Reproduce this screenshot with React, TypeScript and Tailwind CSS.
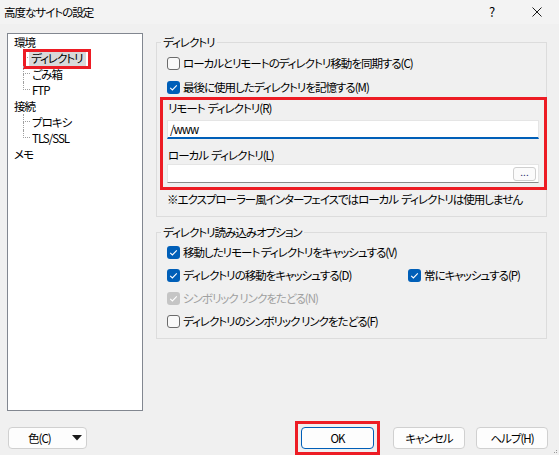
import React from 'react'

type CheckState = 'on' | 'off' | 'disabled'

function CheckBox({ state }: { state: CheckState }) {
  if (state === 'off') {
    return <span className="block h-[13px] w-[13px] shrink-0 rounded-[3px] border border-[#6b6b6b] bg-[#f9f9f9]" />
  }
  return (
    <span
      className={
        state === 'on'
          ? 'flex h-[13px] w-[13px] shrink-0 items-center justify-center rounded-[3px] bg-[#005fb8]'
          : 'flex h-[13px] w-[13px] shrink-0 items-center justify-center rounded-[3px] bg-[#c5c5c5]'
      }
    >
      <svg width="13" height="13" viewBox="0 0 13 13">
        <polyline points="3.2,6.8 5.4,9 9.8,4.4" fill="none" stroke="white" strokeWidth="1.1" />
      </svg>
    </span>
  )
}

function CheckRow({ state, label, hotkey, className = '' }: { state: CheckState; label: string; hotkey: string; className?: string }) {
  const disabled = state === 'disabled'
  return (
    <div className={'flex h-[16px] items-center gap-[3px] whitespace-nowrap ' + className}>
      <CheckBox state={state} />
      <span className={disabled ? 'text-[#a0a0a0]' : 'text-black'}>
        {label}({hotkey})
      </span>
    </div>
  )
}

function TreeChild({ label, last, selected }: { label: string; last?: boolean; selected?: boolean }) {
  return (
    <div className="relative flex h-[16px] items-center">
      <div className="flex h-full w-[7px] shrink-0 flex-col">
        <div className="h-[8px] w-[7px] border-b border-l border-dotted border-[#a0a0a0]" />
        {!last && <div className="h-[8px] w-[7px] border-l border-dotted border-[#a0a0a0]" />}
      </div>
      {selected ? (
        <>
          <span className="ml-[-1px] flex h-[15px] w-[57px] items-center bg-[#d9d9d9] pl-[2px]">{label}</span>
          <span className="absolute left-0 top-[-1px] h-[20px] w-[68px] border-[3px] border-[#ed1c24]" />
        </>
      ) : (
        <span className="ml-[2px]">{label}</span>
      )}
    </div>
  )
}

function Button({ children, primary }: { children: React.ReactNode; primary?: boolean }) {
  return (
    <div
      className={
        primary
          ? 'flex h-[22px] w-[73px] items-center justify-center rounded-[4px] border border-[#005fb8] bg-[#fdfdfd]'
          : 'flex h-[22px] w-[72px] items-center justify-center rounded-[4px] border border-[#d0d0d0] bg-[#fdfdfd]'
      }
    >
      {children}
    </div>
  )
}

export default function App() {
  return (
    <div className="relative h-[455px] w-[559px] overflow-hidden bg-[#f0f0f0] font-['Noto_Sans_CJK_JP',sans-serif] text-[11.5px] leading-[16px] tracking-[-1px] text-black [font-feature-settings:'palt']">
      {/* Title bar */}
      <div className="flex h-[24px] items-center bg-[#f3f3f3]">
        <span className="ml-[4px] flex-1">高度なサイトの設定</span>
        <div className="flex h-full w-[45px] items-center justify-center text-[13px]">?</div>
        <div className="flex h-full w-[45px] items-center justify-center">
          <svg width="10" height="10" viewBox="0 0 10 10">
            <path d="M0.5 0.5 L9.5 9.5 M9.5 0.5 L0.5 9.5" stroke="#1a1a1a" strokeWidth="1" />
          </svg>
        </div>
      </div>

      <div className="px-[7px] pt-[9px]">
        <div className="flex h-[378px]">
          {/* Tree */}
          <div className="h-full w-[136px] shrink-0 border border-[#828790] bg-white">
            <div className="pl-[6px]">環境</div>
            <div className="pl-[15px]">
              <TreeChild label="ディレクトリ" selected />
              <TreeChild label="ごみ箱" />
              <TreeChild label="FTP" last />
            </div>
            <div className="pl-[6px]">接続</div>
            <div className="pl-[15px]">
              <TreeChild label="プロキシ" />
              <TreeChild label="TLS/SSL" last />
            </div>
            <div className="pl-[6px]">メモ</div>
          </div>

          {/* Right side */}
          <div className="ml-[13px] w-[391px]">
            <fieldset className="mt-[1px] border border-[#dcdcdc] pb-[9px]">
              <legend className="ml-[4px] px-[2px]">ディレクトリ</legend>
              <CheckRow className="ml-[10px] mt-[5px]" state="off" label="ローカルとリモートのディレクトリ移動を同期する" hotkey="C" />
              <CheckRow className="ml-[10px] mt-[8px]" state="on" label="最後に使用したディレクトリを記憶する" hotkey="M" />
              <div className="mr-[-1px] ml-[3px] mt-[2px] border-[3px] border-[#ed1c24] px-[4px] pb-[4px] pr-[5px]">
                <div className="pl-[1px]">リモート&nbsp; ディレクトリ(R)</div>
                <div className="mt-[4px] flex h-[19px] items-center border border-b-2 border-[#e5e5e5] border-b-[#005fb8] bg-white pl-[2px]">
                  /www
                </div>
                <div className="mt-[8px] pl-[1px]">ローカル&nbsp; ディレクトリ(L)</div>
                <div className="mt-[1px] flex h-[19px] items-center justify-end border border-[#e5e5e5] border-b-[#8a8a8a] bg-white pr-[2px]">
                  <div className="flex h-[14px] w-[23px] items-center justify-center rounded-[3px] border border-[#cfcfcf] bg-[#fbfbfb] pb-[4px] text-[10px] leading-none tracking-normal text-[#2b2b6b]">
                    ...
                  </div>
                </div>
              </div>
              <div className="ml-[10px] mt-[1px] whitespace-nowrap">※エクスプローラー風インターフェイスではローカル&nbsp; ディレクトリは使用しません</div>
            </fieldset>

            <fieldset className="mt-[7px] border border-[#dcdcdc] pb-[9px]">
              <legend className="ml-[4px] px-[2px]">ディレクトリ読み込みオプション</legend>
              <div className="ml-[10px] mt-[4px] flex flex-col gap-[7px]">
                <CheckRow state="on" label="移動したリモート ディレクトリをキャッシュする" hotkey="V" />
                <div className="flex">
                  <CheckRow className="w-[241px]" state="on" label="ディレクトリの移動をキャッシュする" hotkey="D" />
                  <CheckRow state="on" label="常にキャッシュする" hotkey="P" />
                </div>
                <CheckRow state="disabled" label="シンボリック リンクをたどる" hotkey="N" />
                <CheckRow state="off" label="ディレクトリのシンボリック リンクをたどる" hotkey="F" />
              </div>
            </fieldset>
          </div>
        </div>

        {/* Bottom buttons */}
        <div className="mt-[16px] flex items-center justify-between pr-[4px]">
          <div className="ml-[1px] flex h-[22px] w-[79px] items-center rounded-[4px] border border-[#d0d0d0] bg-[#fdfdfd]">
            <span className="ml-[19px] flex-1">色(C)</span>
            <svg className="mr-[4px]" width="10" height="6" viewBox="0 0 10 6">
              <path d="M0 0 L10 0 L5 5.5 Z" fill="#1a1a1a" />
            </svg>
          </div>
          <div className="flex items-center">
            <div className="m-[-6px] border-[3px] border-[#ed1c24] p-[3px]">
              <Button primary>OK</Button>
            </div>
            <div className="ml-[19px]">
              <Button>キャンセル</Button>
            </div>
            <div className="ml-[11px]">
              <Button>ヘルプ(H)</Button>
            </div>
          </div>
        </div>
      </div>

      {/* size grip */}
      <svg className="absolute bottom-[1px] right-[1px]" width="4" height="4" viewBox="0 0 4 4">
        <rect x="2" y="0" width="1" height="1" fill="#9a9a9a" />
        <rect x="0" y="2" width="1" height="1" fill="#9a9a9a" />
        <rect x="2" y="2" width="1" height="1" fill="#9a9a9a" />
      </svg>
    </div>
  )
}
